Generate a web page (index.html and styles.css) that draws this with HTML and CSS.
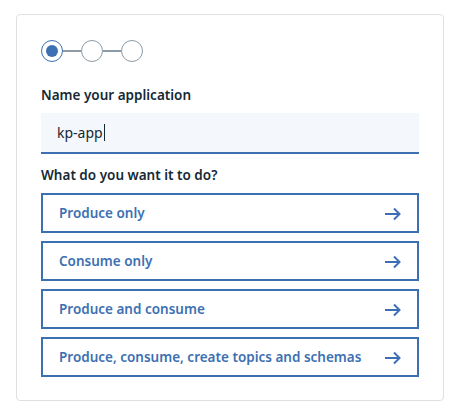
FILE: index.html
```html
<!DOCTYPE html>
<html>
<head>
<meta charset="utf-8">
<link rel="stylesheet" href="styles.css">
</head>
<body>
<div class="card">
  <div class="stepper">
    <span class="step current"><span class="dot"></span></span>
    <span class="link"></span>
    <span class="step"></span>
    <span class="link"></span>
    <span class="step"></span>
  </div>
  <label class="label name-label">Name your application</label>
  <div class="input"><span class="value">kp-app</span><span class="caret"></span></div>
  <div class="label question">What do you want it to do?</div>
  <div class="options">
    <button class="option"><span>Produce only</span><svg viewBox="0 0 16 14" width="16" height="14"><path d="M0 7h14.5M9 1.5l5.5 5.5-5.5 5.5" fill="none" stroke="currentColor" stroke-width="2"/></svg></button>
    <button class="option"><span>Consume only</span><svg viewBox="0 0 16 14" width="16" height="14"><path d="M0 7h14.5M9 1.5l5.5 5.5-5.5 5.5" fill="none" stroke="currentColor" stroke-width="2"/></svg></button>
    <button class="option"><span>Produce and consume</span><svg viewBox="0 0 16 14" width="16" height="14"><path d="M0 7h14.5M9 1.5l5.5 5.5-5.5 5.5" fill="none" stroke="currentColor" stroke-width="2"/></svg></button>
    <button class="option"><span>Produce, consume, create topics and schemas</span><svg viewBox="0 0 16 14" width="16" height="14"><path d="M0 7h14.5M9 1.5l5.5 5.5-5.5 5.5" fill="none" stroke="currentColor" stroke-width="2"/></svg></button>
  </div>
</div>
</body>
</html>
```

FILE: styles.css
```css
html, body { margin: 0; padding: 0; background: #fff; }
body {
  font-family: "Noto Sans", "Open Sans", sans-serif;
  color: #152935;
  padding: 14px 0 0 16px;
}
.card {
  width: 378px;
  border: 1px solid #e0e0e0;
  border-radius: 4px;
  padding: 24px 24px 23px 24px;
}
.stepper {
  display: flex;
  align-items: center;
  height: 24px;
}
.step {
  width: 20px;
  height: 20px;
  border: 1.5px solid #8c9ba5;
  border-radius: 50%;
  display: flex;
  align-items: center;
  justify-content: center;
  box-sizing: content-box;
}
.step.current { border-color: #3d70b2; }
.dot { width: 12px; height: 12px; border-radius: 50%; background: #3d70b2; }
.link { width: 18px; height: 2px; background: #8c9ba5; }
.label {
  display: block;
  font-size: 13.5px;
  font-weight: 600;
  color: #152935;
  line-height: 18px;
}
.name-label { margin-top: 23px; }
.input {
  margin-top: 9px;
  height: 39px;
  background: #f4f7fb;
  border-bottom: 2px solid #3d70b2;
  display: flex;
  align-items: center;
  padding-left: 16px;
  font-size: 14px;
  color: #152935;
}
.caret { width: 1px; height: 17px; background: #152935; margin-left: 1px; }
.question { margin-top: 12px; }
.options {
  margin-top: 9px;
  display: flex;
  flex-direction: column;
  gap: 8px;
}
.option {
  height: 40px;
  border: 2px solid #3d70b2;
  background: #fff;
  color: #3d70b2;
  display: flex;
  align-items: center;
  justify-content: space-between;
  padding: 0 16px;
  font-family: inherit;
  font-size: 13.5px;
  font-weight: 600;
  text-align: left;
  margin: 0;
  box-sizing: border-box;
  width: 100%;
}
.option svg { flex: none; margin-top: 1px; }
```
